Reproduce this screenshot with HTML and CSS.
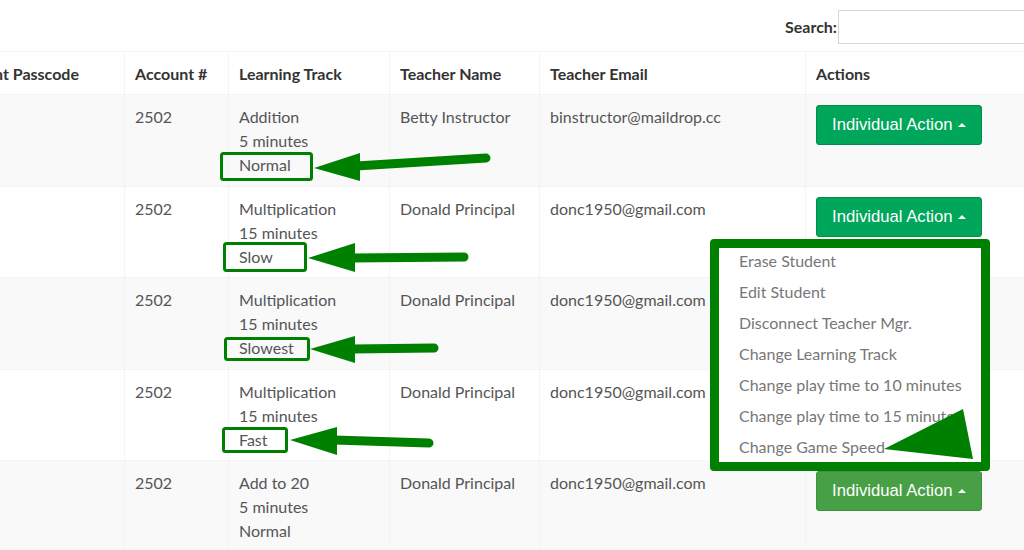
FILE: index.html
```html
<!DOCTYPE html>
<html lang="en">
<head>
    <meta charset="UTF-8">
    <meta name="viewport" content="width=device-width, initial-scale=1.0">
    <title>Students</title>
    <link rel="stylesheet" href="styles.css">
</head>
<body>
    <div class="page">
        <div class="search-bar">
            <label for="search">Search:</label>
            <input type="search" id="search">
        </div>
        <table class="students">
            <colgroup>
                <col class="c-pass">
                <col class="c-acct">
                <col class="c-track">
                <col class="c-teacher">
                <col class="c-email">
                <col class="c-actions">
            </colgroup>
            <thead>
                <tr>
                    <th class="first">Student Passcode</th>
                    <th>Account #</th>
                    <th>Learning Track</th>
                    <th>Teacher Name</th>
                    <th>Teacher Email</th>
                    <th>Actions</th>
                </tr>
            </thead>
            <tbody>
                <tr>
                    <td></td>
                    <td>2502</td>
                    <td>Addition<br>5 minutes<br>Normal</td>
                    <td>Betty Instructor</td>
                    <td>binstructor@maildrop.cc</td>
                    <td><button class="button">Individual Action <span class="caret"></span></button></td>
                </tr>
                <tr>
                    <td></td>
                    <td>2502</td>
                    <td>Multiplication<br>15 minutes<br>Slow</td>
                    <td>Donald Principal</td>
                    <td>donc1950@gmail.com</td>
                    <td>
                        <div class="btn-group">
                            <button class="button">Individual Action <span class="caret"></span></button>
                            <ul class="dropdown">
                                <li>Erase Student</li>
                                <li>Edit Student</li>
                                <li>Disconnect Teacher Mgr.</li>
                                <li>Change Learning Track</li>
                                <li>Change play time to 10 minutes</li>
                                <li>Change play time to 15 minutes</li>
                                <li>Change Game Speed</li>
                            </ul>
                        </div>
                    </td>
                </tr>
                <tr>
                    <td></td>
                    <td>2502</td>
                    <td>Multiplication<br>15 minutes<br>Slowest</td>
                    <td>Donald Principal</td>
                    <td>donc1950@gmail.com</td>
                    <td><button class="button">Individual Action <span class="caret"></span></button></td>
                </tr>
                <tr>
                    <td></td>
                    <td>2502</td>
                    <td>Multiplication<br>15 minutes<br>Fast</td>
                    <td>Donald Principal</td>
                    <td>donc1950@gmail.com</td>
                    <td><button class="button">Individual Action <span class="caret"></span></button></td>
                </tr>
                <tr>
                    <td></td>
                    <td>2502</td>
                    <td>Add to 20<br>5 minutes<br>Normal</td>
                    <td>Donald Principal</td>
                    <td>donc1950@gmail.com</td>
                    <td><button class="button active">Individual Action <span class="caret"></span></button></td>
                </tr>
            </tbody>
        </table>
    </div>

    <!-- annotation marks drawn over the screenshot -->
    <svg class="marks" width="1024" height="550" viewBox="0 0 1024 550">
        <g fill="none" stroke="#008000" stroke-width="3">
            <rect x="221.5" y="153.5" width="90" height="26" rx="2"/>
            <rect x="224.5" y="243.5" width="81" height="27" rx="2"/>
            <rect x="225.5" y="338.5" width="83" height="21" rx="2"/>
            <rect x="223.5" y="428.5" width="63" height="23" rx="2"/>
        </g>
        <g stroke="#008000" stroke-width="9" stroke-linecap="round">
            <line x1="356" y1="166" x2="486" y2="158"/>
            <line x1="352" y1="258" x2="464" y2="257"/>
            <line x1="352" y1="349" x2="434" y2="348"/>
            <line x1="334" y1="440" x2="429" y2="443"/>
        </g>
        <g fill="#008000">
            <polygon points="314,168 360,153 360,181"/>
            <polygon points="308,258 355,243 355,272"/>
            <polygon points="310,349 355,336 355,363"/>
            <polygon points="290,440 337,427 337,455"/>
            <polygon points="884,449 963,409 973,459"/>
        </g>
    </svg>
</body>
</html>
```

FILE: styles.css
```css
body {
    margin: 0;
    position: relative;
    overflow: hidden;
    width: 1024px;
    height: 550px;
    font-family: "Source Sans Pro", Lato, "Liberation Sans", sans-serif;
    font-size: 16px;
    color: #555;
    background-color: #fff;
}

.page {
    width: 1144px;
    margin-left: -60px;
}

.search-bar {
    display: flex;
    justify-content: flex-end;
    align-items: flex-start;
    padding-top: 10px;
    height: 51px;
    box-sizing: border-box;
}

.search-bar label {
    font-weight: bold;
    color: #333;
    line-height: 34px;
    margin-right: 1px;
}

.search-bar input {
    width: 246px;
    height: 34px;
    box-sizing: border-box;
    border: 1px solid #d2d6de;
    padding: 6px 12px;
}

.students {
    width: 100%;
    table-layout: fixed;
    border-collapse: collapse;
}

.c-pass { width: 184px; }
.c-acct { width: 104px; }
.c-track { width: 161px; }
.c-teacher { width: 150px; }
.c-email { width: 266px; }
.c-actions { width: 279px; }

.students th,
.students td {
    border: 1px solid #f4f4f4;
    text-align: left;
    vertical-align: top;
    line-height: 24px;
    padding: 10px 10px 8.5px;
}

.students th {
    color: #333;
    font-weight: bold;
    padding: 10px 10px 8px;
}

.students th.first {
    padding-left: 12px;
}

.students tbody tr:nth-child(odd) {
    background-color: #f9f9f9;
}

.button {
    display: inline-flex;
    align-items: center;
    height: 40px;
    padding: 0 15px;
    font-family: "Liberation Sans", Arial, sans-serif;
    font-size: 16.7px;
    color: #fff;
    background-color: #00a65a;
    border: 1px solid #008d4c;
    border-radius: 3px;
    cursor: pointer;
}

.button.active {
    background-color: #47a046;
    border-color: #3f913e;
}

.caret {
    display: inline-block;
    width: 0;
    height: 0;
    margin-left: 5px;
    border-left: 4px solid transparent;
    border-right: 4px solid transparent;
    border-bottom: 4px solid #fff;
}

.btn-group {
    position: relative;
}

.dropdown {
    position: absolute;
    top: calc(100% + 2px);
    left: -106px;
    width: 280px;
    height: 232px;
    box-sizing: border-box;
    margin: 0;
    padding: 0;
    list-style: none;
    background-color: #fff;
    border: 9px solid #008000;
    border-radius: 4px;
    overflow: hidden;
    z-index: 5;
}

.dropdown li {
    line-height: 31px;
    padding: 0 20px;
    color: #777;
    white-space: nowrap;
}

.dropdown li:first-child {
    margin-top: -3px;
}

.marks {
    position: absolute;
    top: 0;
    left: 0;
    pointer-events: none;
    z-index: 10;
}
```
